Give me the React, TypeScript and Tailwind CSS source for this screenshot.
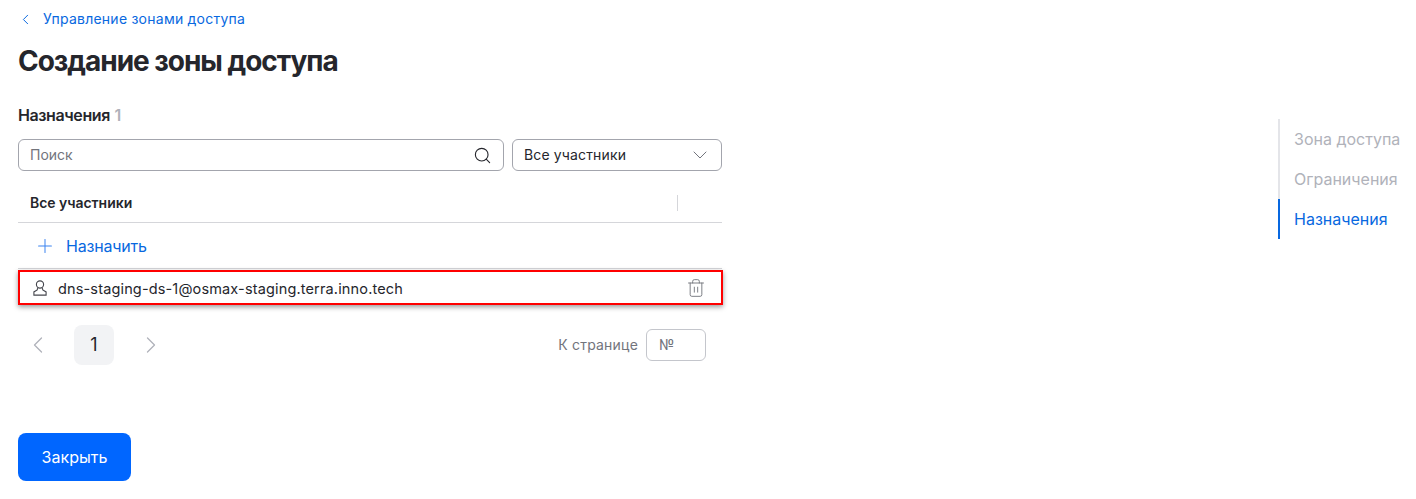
import { ChevronDown, ChevronLeft, ChevronRight, Plus, Search, Trash2 } from 'lucide-react';

const navItems = [
  { label: 'Зона доступа', active: false },
  { label: 'Ограничения', active: false },
  { label: 'Назначения', active: true },
];

const UserIcon = () => (
  <svg width="16" height="18" viewBox="0 0 16 18" fill="none" stroke="#44454c" strokeWidth="1.1">
    <circle cx="8" cy="5.5" r="3.6" />
    <path d="M5.6 9.2 5.2 11 1.9 12.9v3.2h12.2v-3.2L10.8 11l-.4-1.8" />
  </svg>
);

export default function App() {
  return (
    <div className="flex h-[499px] justify-between overflow-hidden bg-white font-['Inter',sans-serif] text-[#25262c]">
      <main className="ml-[18px] w-[704px]">
        <a className="mt-[10px] flex h-[18px] items-center text-sm leading-[18px] tracking-[0.24px] text-[#0868e0]">
          <ChevronLeft className="-ml-px h-[17px] w-[17px] text-[#0868e0]" strokeWidth={1.4} />
          <span className="ml-[9px]">Управление зонами доступа</span>
        </a>
        <h1 className="mt-[14px] h-[38px] text-[28px] leading-[38px] font-bold tracking-[-1.03px]">Создание зоны доступа</h1>

        <h2 className="mt-[25px] h-[20px] text-base leading-[20px] font-semibold tracking-[-0.4px]">
          Назначения <span className="ml-px text-[#b0b2ba]">1</span>
        </h2>

        <div className="mt-[14px] flex gap-2">
          <div className="flex h-8 w-[486px] items-center justify-between rounded-md border border-[#a3a5ad] pr-[11px] pl-[11px] text-sm text-[#72747c]">
            <span>Поиск</span>
            <Search className="h-[19px] w-[19px] text-[#25262c]" strokeWidth={1.4} />
          </div>
          <div className="flex h-8 w-[210px] items-center justify-between rounded-md border border-[#a3a5ad] pr-[9px] pl-[11px] text-sm tracking-[0.15px] text-[#25262c]">
            <span>Все участники</span>
            <ChevronDown className="h-6 w-6 text-[#72747c]" strokeWidth={1} />
          </div>
        </div>

        <div className="mt-[12px] flex h-[40px] items-center justify-between border-b border-[#d5d6da] pl-3">
          <span className="text-sm font-semibold tracking-[-0.03px]">Все участники</span>
          <span className="mr-[44px] h-4 w-px bg-[#d5d6da]" />
        </div>

        <div className="flex h-[46px] items-center gap-[10px] border-b border-[#d5d6da] pl-[16px] text-base tracking-[-0.2px] text-[#0868e0]">
          <Plus className="h-[22px] w-[22px] text-[#3d84f0]" strokeWidth={1.1} />
          <span>Назначить</span>
        </div>

        <div className="mt-px flex h-[35px] w-[705px] items-center justify-between border-2 border-[#ff0000] pr-[15px] pl-[12px] shadow-[0_2px_5px_rgba(0,0,0,0.4)]">
          <div className="flex items-center gap-[10px]">
            <UserIcon />
            <span className="pt-[2px] text-[14.5px] tracking-[0.15px]">dns-staging-ds-1@osmax-staging.terra.inno.tech</span>
          </div>
          <Trash2 className="h-5 w-5 text-[#72747c]" strokeWidth={1.1} />
        </div>

        <div className="mt-5 flex h-10 items-center justify-between pr-4">
          <div className="flex items-center">
            <div className="flex h-10 w-10 items-center justify-center">
              <ChevronLeft className="-ml-px h-7 w-7 text-[#b0b2ba]" strokeWidth={1.1} />
            </div>
            <div className="ml-4 flex h-10 w-10 items-center justify-center rounded-lg bg-[#f2f3f5] text-lg">1</div>
            <div className="ml-[17px] flex h-10 w-10 items-center justify-center">
              <ChevronRight className="h-7 w-7 text-[#b0b2ba]" strokeWidth={1.1} />
            </div>
          </div>
          <div className="flex items-center gap-2 text-sm tracking-[0.2px] text-[#72747c]">
            <span>К странице</span>
            <div className="flex h-8 w-[60px] items-center rounded-md border border-[#c4c6cc] pl-3">№</div>
          </div>
        </div>

        <button className="mt-[68px] flex h-12 w-[113px] items-center justify-center rounded-lg bg-[#0066ff] text-base text-white">Закрыть</button>
      </main>

      <aside className="mt-[119px] w-[138px] shrink-0 self-start">
        {navItems.map((item) => (
          <div
            key={item.label}
            className={
              item.active
                ? 'flex h-10 items-center border-l-2 border-[#0868e0] pl-[14px] text-base whitespace-nowrap text-[#0868e0]'
                : 'flex h-10 items-center border-l-2 border-[#e4e5e9] pl-[14px] text-base whitespace-nowrap text-[#b0b2ba]'
            }
          >
            {item.label}
          </div>
        ))}
      </aside>
    </div>
  );
}
